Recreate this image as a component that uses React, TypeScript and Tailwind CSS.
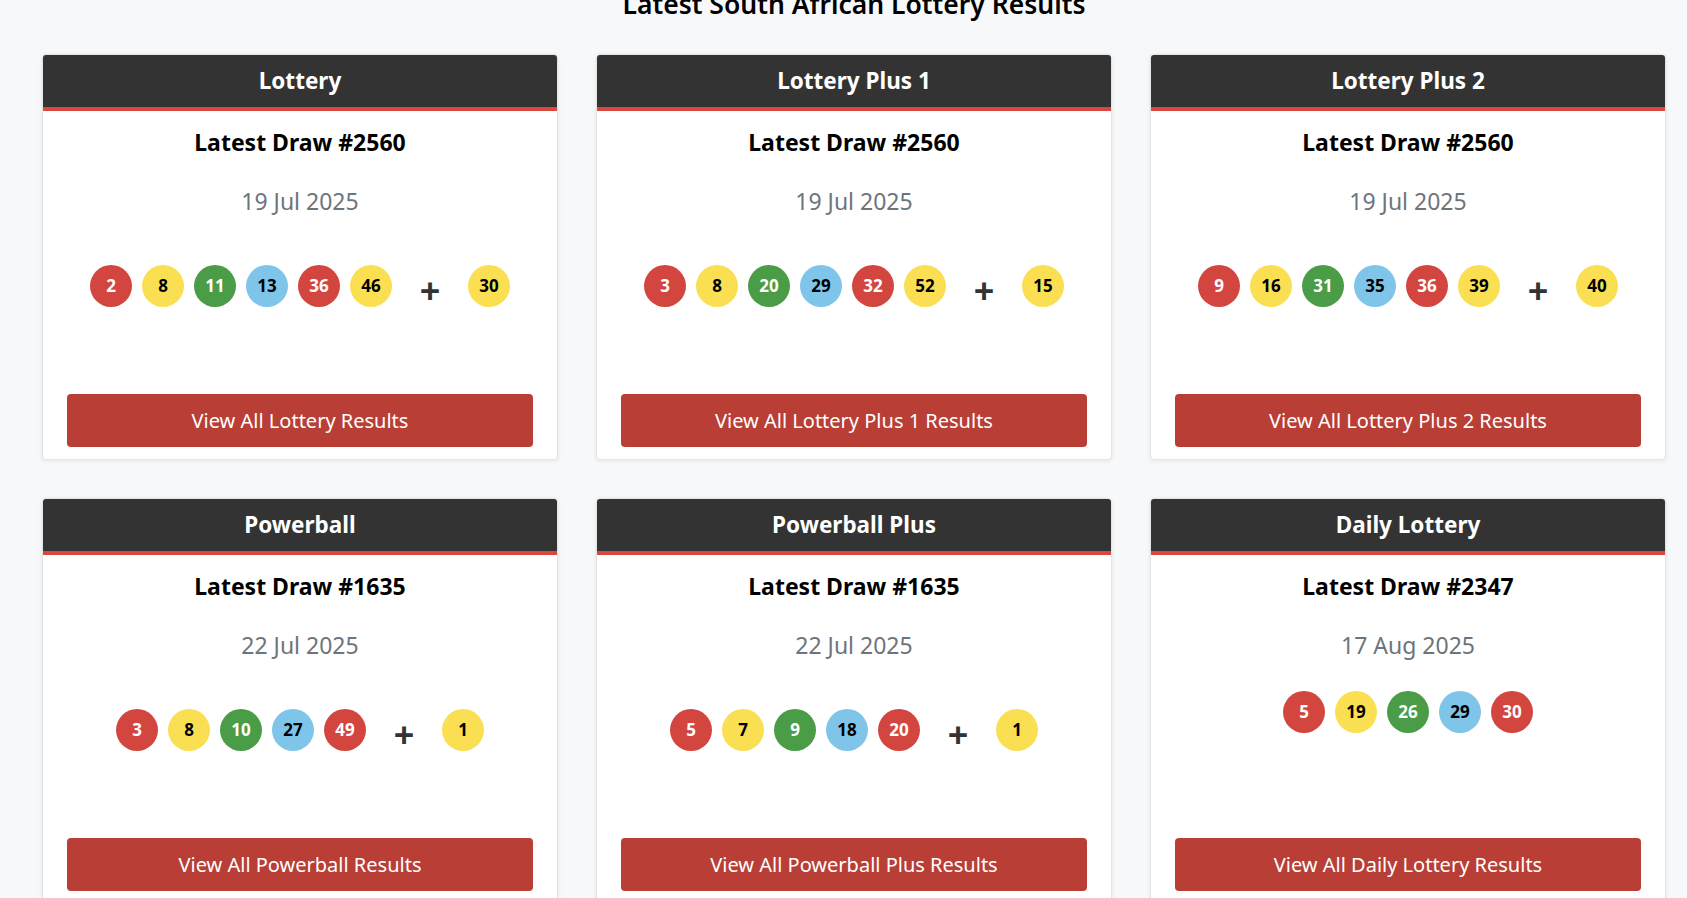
type Ball = { n: number; c: "r" | "y" | "g" | "b" };

type Game = {
  name: string;
  draw: number;
  date: string;
  balls: Ball[];
  bonus?: number;
  link: string;
};

const games: Game[] = [
  {
    name: "Lottery",
    draw: 2560,
    date: "19 Jul 2025",
    balls: [
      { n: 2, c: "r" },
      { n: 8, c: "y" },
      { n: 11, c: "g" },
      { n: 13, c: "b" },
      { n: 36, c: "r" },
      { n: 46, c: "y" },
    ],
    bonus: 30,
    link: "View All Lottery Results",
  },
  {
    name: "Lottery Plus 1",
    draw: 2560,
    date: "19 Jul 2025",
    balls: [
      { n: 3, c: "r" },
      { n: 8, c: "y" },
      { n: 20, c: "g" },
      { n: 29, c: "b" },
      { n: 32, c: "r" },
      { n: 52, c: "y" },
    ],
    bonus: 15,
    link: "View All Lottery Plus 1 Results",
  },
  {
    name: "Lottery Plus 2",
    draw: 2560,
    date: "19 Jul 2025",
    balls: [
      { n: 9, c: "r" },
      { n: 16, c: "y" },
      { n: 31, c: "g" },
      { n: 35, c: "b" },
      { n: 36, c: "r" },
      { n: 39, c: "y" },
    ],
    bonus: 40,
    link: "View All Lottery Plus 2 Results",
  },
  {
    name: "Powerball",
    draw: 1635,
    date: "22 Jul 2025",
    balls: [
      { n: 3, c: "r" },
      { n: 8, c: "y" },
      { n: 10, c: "g" },
      { n: 27, c: "b" },
      { n: 49, c: "r" },
    ],
    bonus: 1,
    link: "View All Powerball Results",
  },
  {
    name: "Powerball Plus",
    draw: 1635,
    date: "22 Jul 2025",
    balls: [
      { n: 5, c: "r" },
      { n: 7, c: "y" },
      { n: 9, c: "g" },
      { n: 18, c: "b" },
      { n: 20, c: "r" },
    ],
    bonus: 1,
    link: "View All Powerball Plus Results",
  },
  {
    name: "Daily Lottery",
    draw: 2347,
    date: "17 Aug 2025",
    balls: [
      { n: 5, c: "r" },
      { n: 19, c: "y" },
      { n: 26, c: "g" },
      { n: 29, c: "b" },
      { n: 30, c: "r" },
    ],
    link: "View All Daily Lottery Results",
  },
];

const ballStyles = {
  r: "bg-[#d3463f] text-white",
  y: "bg-[#fbdf53] text-black",
  g: "bg-[#4a9c47] text-white",
  b: "bg-[#7fc5ea] text-black",
};

const LottoBall = ({ ball }: { ball: Ball }) => (
  <span
    className={`w-[42px] h-[42px] rounded-full flex items-center justify-center font-bold text-[17px] ${ballStyles[ball.c]}`}
  >
    {ball.n}
  </span>
);

const ResultCard = ({ game }: { game: Game }) => {
  return (
    <div className="bg-white h-[406px] flex flex-col rounded-[4px] border border-[#e3e4e6] shadow-[0_1px_4px_rgba(0,0,0,0.08)] overflow-hidden">
      <div className="h-[56px] bg-[#333333] border-b-4 border-[#d9473f] flex items-center justify-center">
        <h3 className="text-white font-bold text-[22.5px]">{game.name}</h3>
      </div>
      <div className="flex-1 flex flex-col items-center px-6 pt-4 pb-3">
        <h4 className="font-bold text-[23px] leading-[30px] text-black">Latest Draw #{game.draw}</h4>
        <p className="mt-[28px] text-[23px] leading-[32px] text-[#6c757d]">{game.date}</p>
        <div className="mt-[30px] flex items-center gap-[10px]">
          {game.balls.map((b, i) => (
            <LottoBall key={i} ball={b} />
          ))}
          {game.bonus !== undefined && (
            <>
              <span className="w-[56px] h-[78px] pt-[10px] flex items-center justify-center text-[36px] font-bold text-[#333333]">
                +
              </span>
              <LottoBall ball={{ n: game.bonus, c: "y" }} />
            </>
          )}
        </div>
        <button className="mt-auto w-full h-[53px] rounded-[4px] bg-[#b83e36] text-white text-[20px]">
          {game.link}
        </button>
      </div>
    </div>
  );
};

export default function App() {
  return (
    <div className="min-h-screen bg-[#f7f8fa] pl-[42px] pr-[21px] font-['Noto_Sans',sans-serif] overflow-hidden">
      <h2 className="-mt-[22px] mb-[22px] h-[54px] flex items-center justify-center text-[26.5px] font-semibold text-black">
        Latest South African Lottery Results
      </h2>
      <div className="grid grid-cols-3 gap-x-[38px] gap-y-[38px]">
        {games.map((g) => (
          <ResultCard key={g.name} game={g} />
        ))}
      </div>
    </div>
  );
}
